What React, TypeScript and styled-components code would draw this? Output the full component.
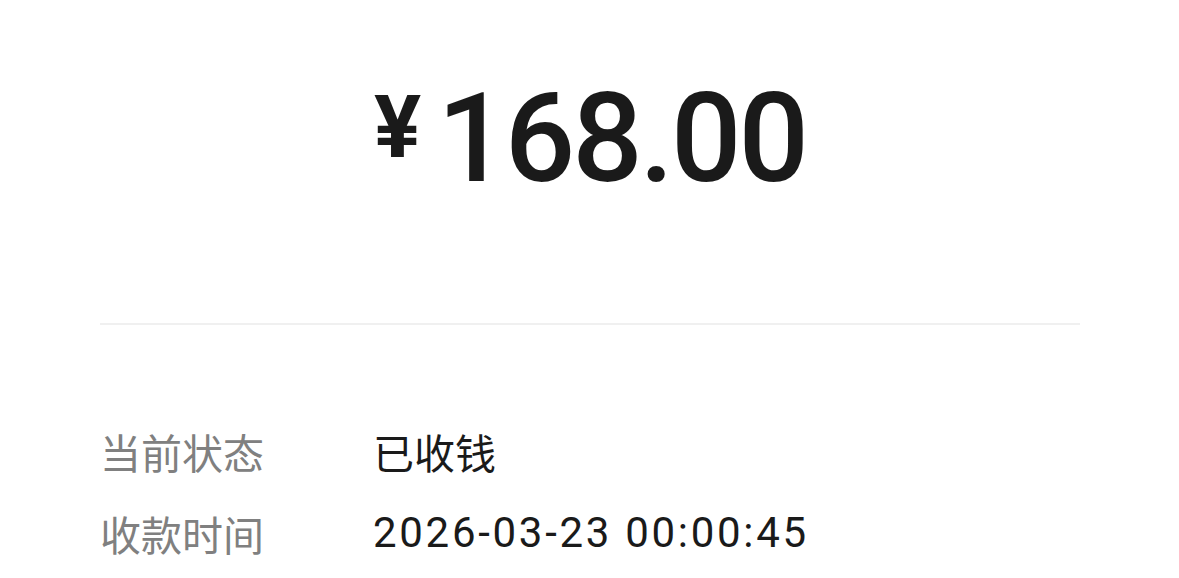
import React from 'react';
import styled, { createGlobalStyle } from 'styled-components';

const GlobalStyle = createGlobalStyle`
  html, body {
    margin: 0;
    padding: 0;
    background: #fff;
    overflow: hidden;
  }
`;

const Page = styled.div`
  width: 1179px;
  height: 578px;
  box-sizing: border-box;
  padding: 77px 99px 0 100px;
  font-family: 'Roboto', 'Noto Sans CJK SC', sans-serif;
  color: #1a1a1a;
`;

const Amount = styled.div`
  display: flex;
  justify-content: center;
  align-items: flex-start;
`;

const Currency = styled.span`
  font-size: 88px;
  font-weight: 700;
  line-height: 1;
  margin-top: 6px;
  margin-right: 16px;
`;

const Figure = styled.span`
  font-size: 124px;
  font-weight: 500;
  line-height: 1;
  letter-spacing: -3px;
`;

const Divider = styled.hr`
  margin: 122px 0 0;
  border: none;
  height: 2px;
  background: #f0f0f0;
`;

const Details = styled.dl`
  margin: 85px 0 0;
  display: grid;
  grid-template-columns: 273px 1fr;
  grid-auto-rows: 82px;
  align-items: center;
`;

const Label = styled.dt`
  font-family: 'Noto Sans CJK SC', sans-serif;
  font-size: 41px;
  color: #808080;
  line-height: 82px;
`;

const Value = styled.dd<{ $numeric?: boolean }>`
  margin: 0;
  font-family: ${(p) => (p.$numeric ? "'Roboto', 'Noto Sans CJK SC'" : "'Noto Sans CJK SC'")}, sans-serif;
  font-size: ${(p) => (p.$numeric ? '42px' : '41px')};
  letter-spacing: ${(p) => (p.$numeric ? '2.7px' : '0')};
  color: #1a1a1a;
  line-height: 82px;
`;

const rows = [
  { label: '当前状态', value: '已收钱' },
  { label: '收款时间', value: '2026-03-23 00:00:45', numeric: true },
];

function App() {
  return (
    <>
      <GlobalStyle />
      <Page>
        <Amount>
          <Currency>¥</Currency>
          <Figure>168.00</Figure>
        </Amount>
        <Divider />
        <Details>
          {rows.map((r) => (
            <React.Fragment key={r.label}>
              <Label>{r.label}</Label>
              <Value $numeric={r.numeric}>{r.value}</Value>
            </React.Fragment>
          ))}
        </Details>
      </Page>
    </>
  );
}

export default App;
